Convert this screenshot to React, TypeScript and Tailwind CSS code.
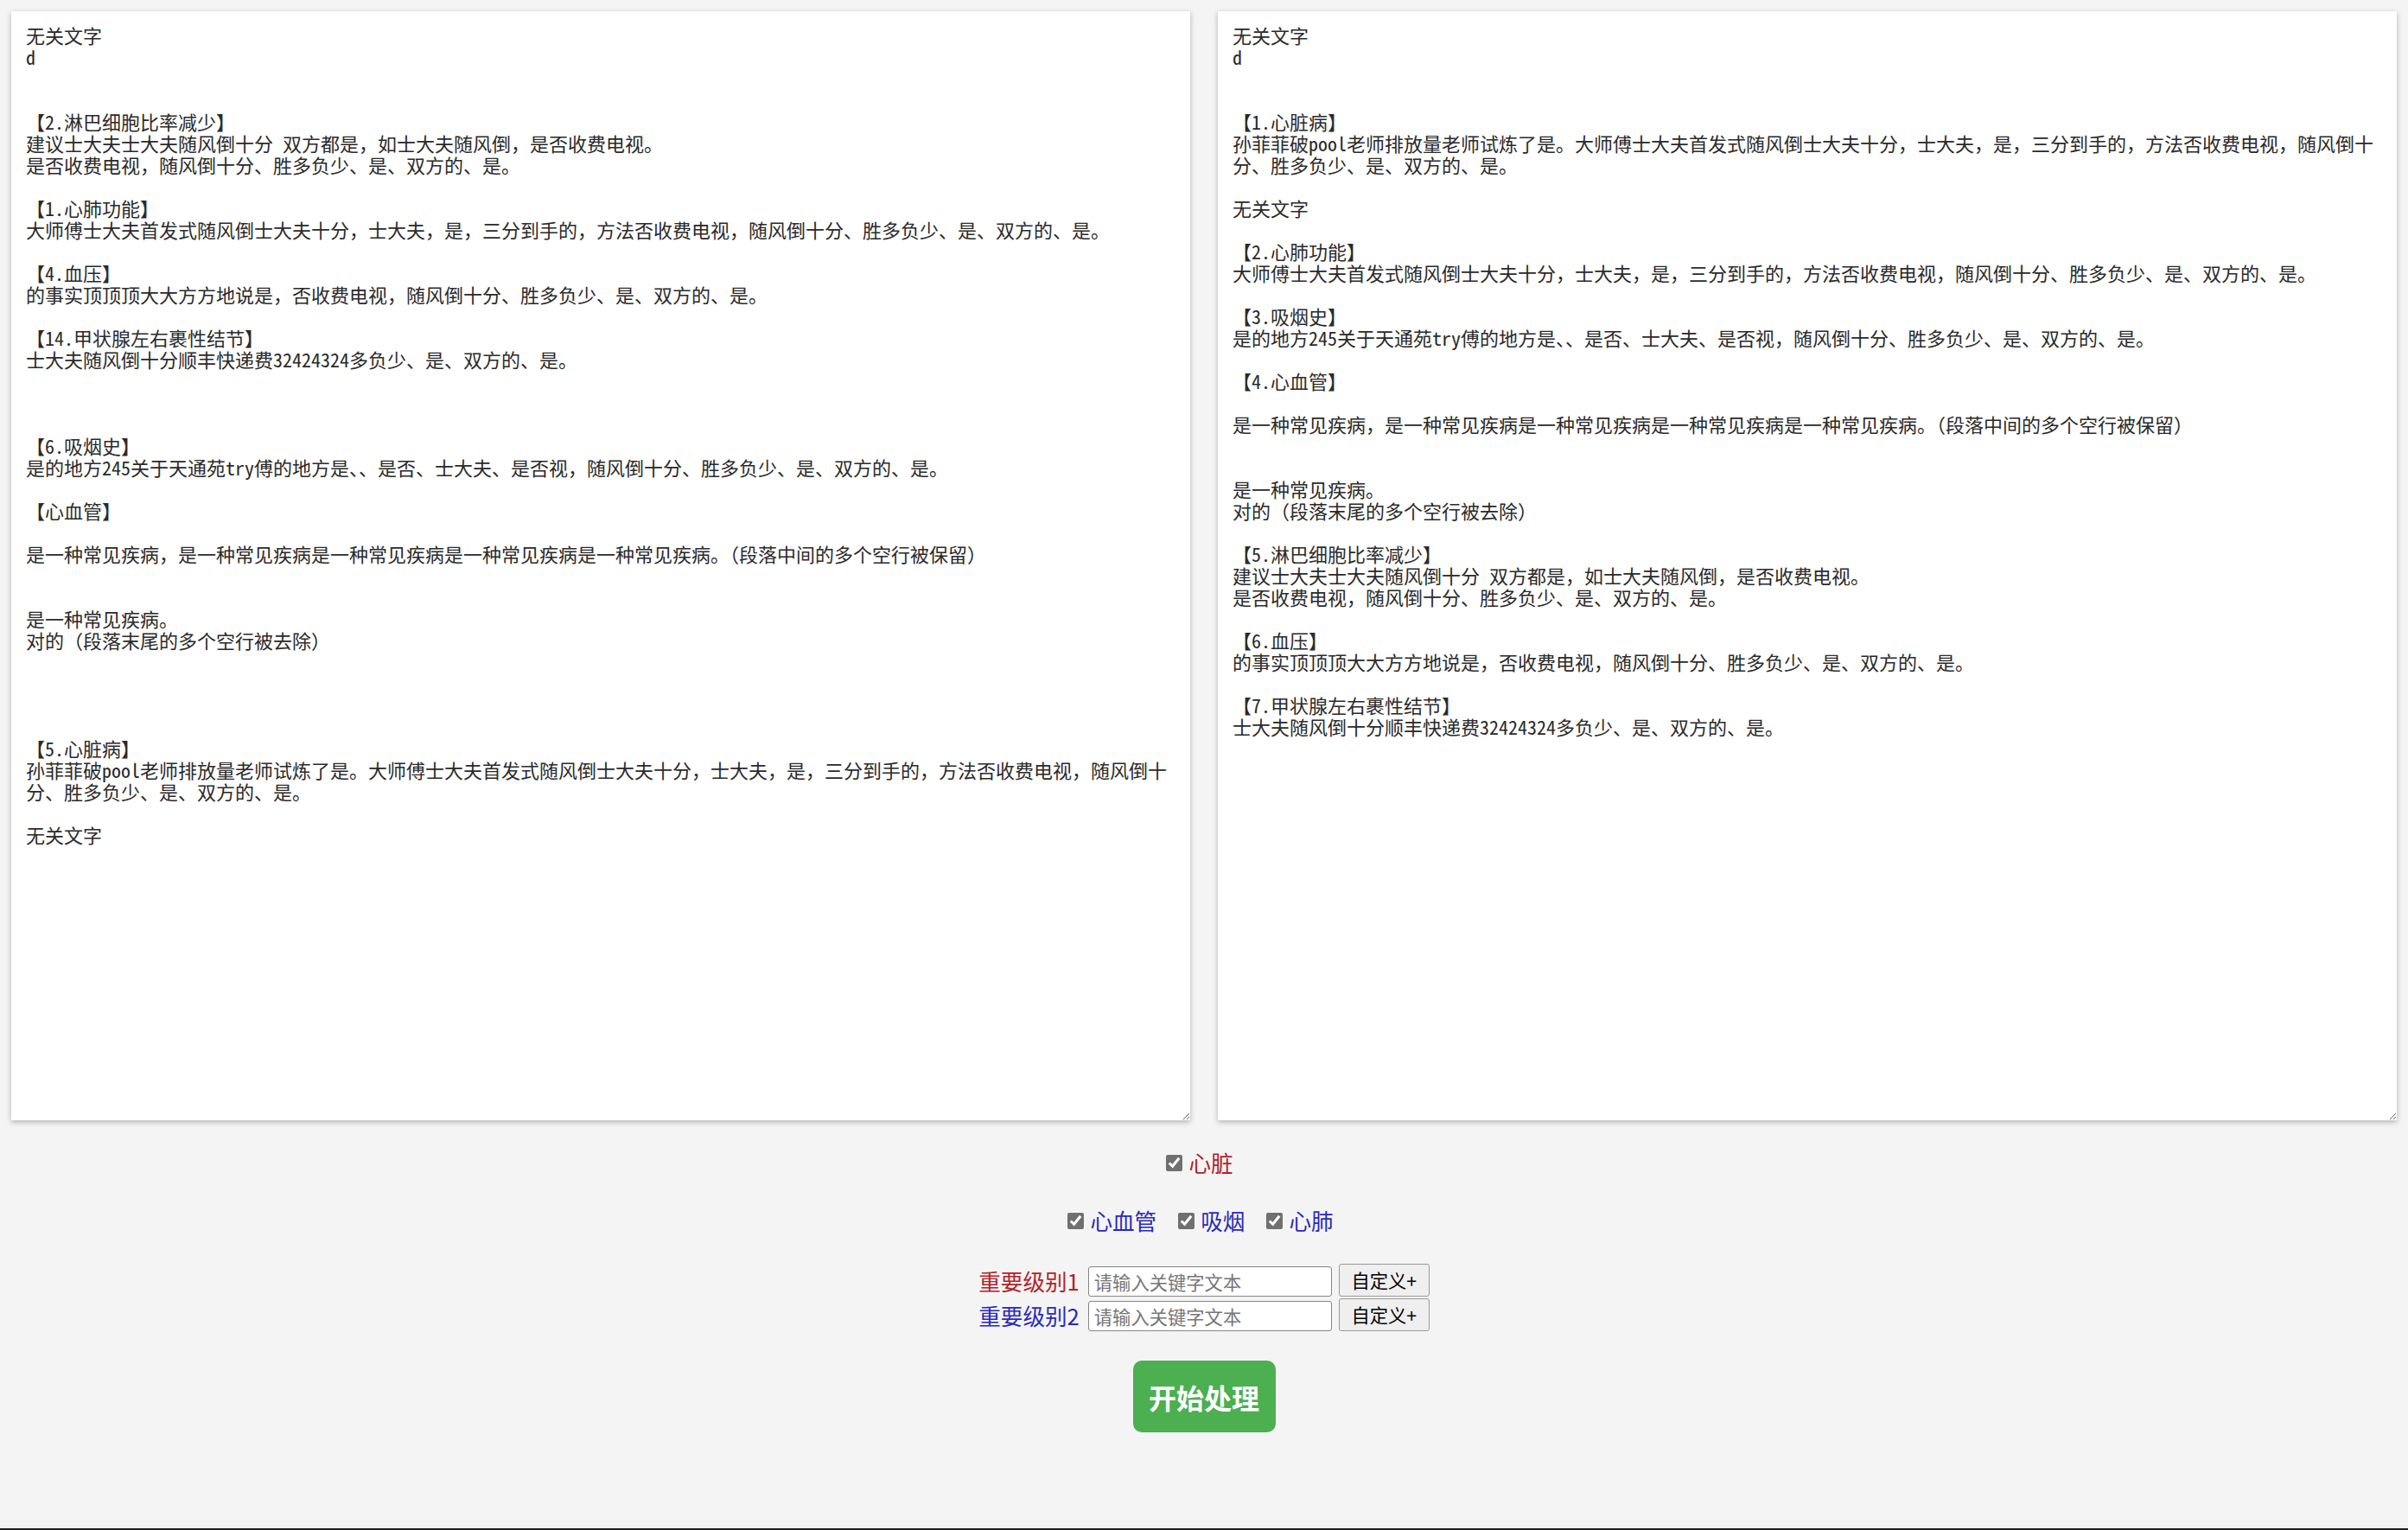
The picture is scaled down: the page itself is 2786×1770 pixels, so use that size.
import React from "react";

const leftText = [
  "无关文字",
  "d",
  "",
  "",
  "【2.淋巴细胞比率减少】",
  "建议士大夫士大夫随风倒十分 双方都是，如士大夫随风倒，是否收费电视。",
  "是否收费电视，随风倒十分、胜多负少、是、双方的、是。",
  "",
  "【1.心肺功能】",
  "大师傅士大夫首发式随风倒士大夫十分，士大夫，是，三分到手的，方法否收费电视，随风倒十分、胜多负少、是、双方的、是。",
  "",
  "【4.血压】",
  "的事实顶顶顶大大方方地说是，否收费电视，随风倒十分、胜多负少、是、双方的、是。",
  "",
  "【14.甲状腺左右裹性结节】",
  "士大夫随风倒十分顺丰快递费32424324多负少、是、双方的、是。",
  "",
  "",
  "",
  "【6.吸烟史】",
  "是的地方245关于天通苑try傅的地方是、、是否、士大夫、是否视，随风倒十分、胜多负少、是、双方的、是。",
  "",
  "【心血管】",
  "",
  "是一种常见疾病，是一种常见疾病是一种常见疾病是一种常见疾病是一种常见疾病。（段落中间的多个空行被保留）",
  "",
  "",
  "是一种常见疾病。",
  "对的（段落末尾的多个空行被去除）",
  "",
  "",
  "",
  "",
  "【5.心脏病】",
  "孙菲菲破pool老师排放量老师试炼了是。大师傅士大夫首发式随风倒士大夫十分，士大夫，是，三分到手的，方法否收费电视，随风倒十",
  "分、胜多负少、是、双方的、是。",
  "",
  "无关文字",
].join("\n");

const rightText = [
  "无关文字",
  "d",
  "",
  "",
  "【1.心脏病】",
  "孙菲菲破pool老师排放量老师试炼了是。大师傅士大夫首发式随风倒士大夫十分，士大夫，是，三分到手的，方法否收费电视，随风倒十",
  "分、胜多负少、是、双方的、是。",
  "",
  "无关文字",
  "",
  "【2.心肺功能】",
  "大师傅士大夫首发式随风倒士大夫十分，士大夫，是，三分到手的，方法否收费电视，随风倒十分、胜多负少、是、双方的、是。",
  "",
  "【3.吸烟史】",
  "是的地方245关于天通苑try傅的地方是、、是否、士大夫、是否视，随风倒十分、胜多负少、是、双方的、是。",
  "",
  "【4.心血管】",
  "",
  "是一种常见疾病，是一种常见疾病是一种常见疾病是一种常见疾病是一种常见疾病。（段落中间的多个空行被保留）",
  "",
  "",
  "是一种常见疾病。",
  "对的（段落末尾的多个空行被去除）",
  "",
  "【5.淋巴细胞比率减少】",
  "建议士大夫士大夫随风倒十分 双方都是，如士大夫随风倒，是否收费电视。",
  "是否收费电视，随风倒十分、胜多负少、是、双方的、是。",
  "",
  "【6.血压】",
  "的事实顶顶顶大大方方地说是，否收费电视，随风倒十分、胜多负少、是、双方的、是。",
  "",
  "【7.甲状腺左右裹性结节】",
  "士大夫随风倒十分顺丰快递费32424324多负少、是、双方的、是。",
].join("\n");

function Box({ text }: { text: string }) {
  return (
    <textarea
      defaultValue={text}
      wrap="off"
      spellCheck={false}
      className="flex-1 min-w-0 h-[1283px] bg-white border-0 outline-none overflow-hidden px-[17px] pt-[15px] pb-[17px] text-[22px] leading-[25px] text-[#2a2a2a] font-['Noto_Sans_Mono_CJK_SC','Noto_Sans_CJK_SC',monospace] shadow-[0_2px_6px_rgba(0,0,0,0.28)] whitespace-pre"
    />
  );
}

function Check({ label, color }: { label: string; color: string }) {
  return (
    <label className="flex items-center gap-[7px]">
      <input
        type="checkbox"
        defaultChecked
        className="w-[19px] h-[19px] m-0 accent-[#707070]"
      />
      <span className={color}>{label}</span>
    </label>
  );
}

function KeyRow({ label, color }: { label: string; color: string }) {
  return (
    <div className="flex items-end justify-center">
      <span className={`text-[25.6px] leading-[36px] mr-[10px] ${color}`}>{label}</span>
      <input
        type="text"
        placeholder="请输入关键字文本"
        className="w-[282px] h-[35px] px-[6px] bg-white border border-[#858585] rounded-[3px] text-[21.3px] text-black placeholder:text-[#767676] outline-none"
      />
      <button className="ml-[8px] w-[105px] h-[38px] bg-[#efefef] border border-[#9a9a9a] rounded-[3px] text-[21.3px] text-black">
        自定义+
      </button>
    </div>
  );
}

export default function App() {
  return (
    <div className="h-[1770px] bg-[#f4f4f4] border-b-[2px] border-[#1e1e1e] flex flex-col font-['Noto_Sans_CJK_SC','Noto_Sans',sans-serif]">
      <div className="flex gap-[32px] px-[13px] pt-[13px]">
        <Box text={leftText} />
        <Box text={rightText} />
      </div>

      <div className="mt-[32px] flex justify-center h-[34px] items-center pr-[10px] text-[25.6px]">
        <Check label="心脏" color="text-[#b0232a]" />
      </div>

      <div className="mt-[33px] flex justify-center h-[34px] items-center gap-[25px] pr-[8px] text-[25.6px]">
        <Check label="心血管" color="text-[#2a2ab8]" />
        <Check label="吸烟" color="text-[#2a2ab8]" />
        <Check label="心肺" color="text-[#2a2ab8]" />
      </div>

      <div className="mt-[33px] flex flex-col gap-[2px]">
        <KeyRow label="重要级别1" color="text-[#b0232a]" />
        <KeyRow label="重要级别2" color="text-[#2a2ab8]" />
      </div>

      <div className="mt-[34px] flex justify-center">
        <button className="w-[165px] h-[83px] bg-[#4caf50] rounded-[10px] text-white font-bold text-[32px]">
          开始处理
        </button>
      </div>
    </div>
  );
}
